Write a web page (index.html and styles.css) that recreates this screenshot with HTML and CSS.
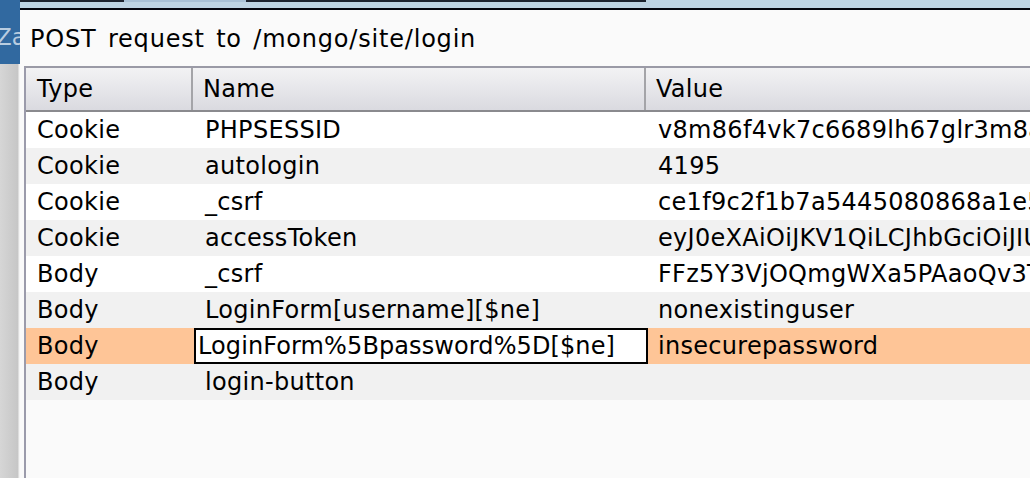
FILE: index.html
```html
<!DOCTYPE html>
<html>
<head>
<meta charset="utf-8">
<link rel="stylesheet" href="styles.css">
</head>
<body>
<div class="screen">
  <div class="side">
    <div class="side-top"><span class="side-text">Za</span></div>
    <div class="side-bottom"></div>
  </div>
  <div class="dialog">
    <div class="titlebar"><div class="tb-dark a"></div><div class="tb-light"></div><div class="tb-dark b"></div></div>
    <div class="title">POST request to /mongo/site/login</div>
    <div class="table">
      <div class="thead">
        <div class="th c1">Type</div>
        <div class="th c2">Name</div>
        <div class="th c3">Value</div>
      </div>
      <div class="row white"><div class="td c1">Cookie</div><div class="td c2">PHPSESSID</div><div class="td c3">v8m86f4vk7c6689lh67glr3m8a1</div></div>
      <div class="row grey"><div class="td c1">Cookie</div><div class="td c2">autologin</div><div class="td c3">4195</div></div>
      <div class="row white"><div class="td c1">Cookie</div><div class="td c2">_csrf</div><div class="td c3">ce1f9c2f1b7a5445080868a1e5a</div></div>
      <div class="row grey"><div class="td c1">Cookie</div><div class="td c2">accessToken</div><div class="td c3">eyJ0eXAiOiJKV1QiLCJhbGciOiJIUzI1</div></div>
      <div class="row white"><div class="td c1">Body</div><div class="td c2">_csrf</div><div class="td c3">FFz5Y3VjOQmgWXa5PAaoQv3Tc</div></div>
      <div class="row grey"><div class="td c1">Body</div><div class="td c2">LoginForm[username][$ne]</div><div class="td c3">nonexistinguser</div></div>
      <div class="row sel"><div class="td c1">Body</div><div class="td c2 edit">LoginForm%5Bpassword%5D[$ne]</div><div class="td c3">insecurepassword</div></div>
      <div class="row grey"><div class="td c1">Body</div><div class="td c2">login-button</div><div class="td c3"></div></div>
    </div>
  </div>
</div>
</body>
</html>
```
FILE: styles.css
```css
html, body {
  margin: 0;
  padding: 0;
}
body {
  width: 1030px;
  height: 478px;
  overflow: hidden;
  font-family: "DejaVu Sans", "Liberation Sans", sans-serif;
  color: #000;
}
.screen {
  display: flex;
  width: 1030px;
  height: 478px;
}
.side {
  width: 20px;
  flex: none;
  display: flex;
  flex-direction: column;
}
.side-top {
  height: 64px;
  background: #3169a0;
  overflow: hidden;
  white-space: nowrap;
}
.side-text {
  display: block;
  margin-top: 24px;
  margin-left: -4px;
  font-size: 23px;
  color: #b9cde0;
}
.side-bottom {
  flex: 1;
  background: linear-gradient(to right, #d6d6d6 0, #c6c6c6 18px, #f4f4f4 19px, #f4f4f4 20px);
}
.dialog {
  flex: 1;
  background: #fafafa;
  display: flex;
  flex-direction: column;
  min-width: 0;
}
.titlebar {
  height: 8px;
  border-bottom: 2px solid #050510;
  background: #bed3e5;
  display: flex;
  flex: none;
}
.tb-dark {
  height: 2px;
  background: #1c2230;
}
.tb-dark.a { width: 104px; }
.tb-light { width: 122px; height: 2px; background: #a9c0d7; }
.tb-dark.b { width: 400px; }
.title {
  height: 56px;
  flex: none;
  box-sizing: border-box;
  padding-left: 10px;
  padding-top: 15px;
  font-size: 24px;
  line-height: 28px;
  letter-spacing: 0.8px;
  word-spacing: 3px;
  white-space: nowrap;
}
.table {
  margin-left: 4px;
  flex: 1;
  border-left: 2px solid #9b9bab;
  border-top: 2px solid #9a9aa6;
  background: #fafafa;
  min-width: 0;
}
.thead {
  display: flex;
  height: 42px;
  border-bottom: 2px solid #8a8a8e;
  background: linear-gradient(to bottom, #f2f2f4 0%, #e4e4e8 60%, #dadae0 100%);
}
.th {
  box-sizing: border-box;
  font-size: 24px;
  line-height: 42px;
  letter-spacing: 0.3px;
  white-space: nowrap;
  overflow: hidden;
}
.th.c1 { width: 167px; padding-left: 11px; border-right: 2px solid #a4a4a8; }
.th.c2 { width: 453px; padding-left: 10px; border-right: 2px solid #a4a4a8; }
.th.c3 { flex: 1; padding-left: 10px; }
.row {
  display: flex;
  height: 36px;
}
.row.white { background: #ffffff; }
.row.grey { background: #f1f1f1; }
.row.sel { background: #fec597; }
.td {
  box-sizing: border-box;
  font-size: 24px;
  line-height: 36px;
  letter-spacing: 0.3px;
  white-space: nowrap;
  overflow: hidden;
}
.td.c1 { width: 169px; padding-left: 11px; }
.td.c2 { width: 453px; padding-left: 10px; }
.td.c3 { flex: 1; padding-left: 10px; }
.td.edit {
  margin-left: -1px;
  width: 454px;
  background: #fff;
  border: 2px solid #000;
  padding-left: 2px;
  letter-spacing: 0.1px;
  line-height: 32px;
}
```
